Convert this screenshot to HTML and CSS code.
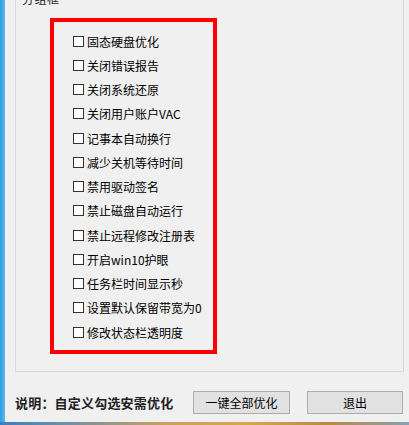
FILE: index.html
```html
<!DOCTYPE html>
<html lang="zh">
<head>
<meta charset="utf-8">
<link rel="stylesheet" href="styles.css">
</head>
<body>
<div class="window">
  <div class="edge"></div>
  <div class="main">
    <div class="group">
      <div class="group-title">分组框</div>
      <div class="redbox">
        <label class="row"><span class="cb"></span>固态硬盘优化</label>
        <label class="row"><span class="cb"></span>关闭错误报告</label>
        <label class="row"><span class="cb"></span>关闭系统还原</label>
        <label class="row"><span class="cb"></span>关闭用户账户VAC</label>
        <label class="row"><span class="cb"></span>记事本自动换行</label>
        <label class="row"><span class="cb"></span>减少关机等待时间</label>
        <label class="row"><span class="cb"></span>禁用驱动签名</label>
        <label class="row"><span class="cb"></span>禁止磁盘自动运行</label>
        <label class="row"><span class="cb"></span>禁止远程修改注册表</label>
        <label class="row"><span class="cb"></span>开启win10护眼</label>
        <label class="row"><span class="cb"></span>任务栏时间显示秒</label>
        <label class="row"><span class="cb"></span>设置默认保留带宽为0</label>
        <label class="row"><span class="cb"></span>修改状态栏透明度</label>
      </div>
    </div>
    <div class="footer">
      <span class="note">说明：自定义勾选安需优化</span>
      <button class="btn btn-all">一键全部优化</button>
      <button class="btn btn-exit">退出</button>
    </div>
  </div>
</div>
<div class="wallpaper"></div>
</body>
</html>
```
FILE: styles.css
```css
html, body {
  margin: 0;
  padding: 0;
  background: #f0f0f0;
  overflow: hidden;
}
body {
  width: 409px;
  height: 425px;
  font-family: "Noto Sans CJK SC", "Liberation Sans", sans-serif;
  font-size: 12px;
  color: #000;
}
.window {
  display: flex;
  height: 422px;
}
.edge {
  width: 5px;
  background: linear-gradient(to right, #2e9de0, #5ab8ec);
}
.main {
  flex: 1;
  display: flex;
  flex-direction: column;
  padding: 0 5px 0 10px;
}
.group {
  height: 380px;
  margin-top: -8px;
  border: 1px solid #d9d9d9;
  box-sizing: border-box;
  padding-left: 34px;
  flex: none;
}
.group-title {
  margin: -1px 0 0 -28px;
  height: 26px;
  line-height: 14px;
  color: #222;
  letter-spacing: 0.5px;
}
.redbox {
  width: 167px;
  height: 336px;
  box-sizing: border-box;
  border: 4px solid #ff0000;
  padding: 7px 0 0 19px;
}
.row {
  display: flex;
  align-items: center;
  height: 24.25px;
  gap: 3px;
  white-space: nowrap;
}
.cb {
  width: 11px;
  height: 11px;
  box-sizing: border-box;
  border: 1px solid #333;
  background: #fdfdfd;
  flex: none;
}
.footer {
  display: flex;
  align-items: center;
  height: 50px;
  padding-top: 10px;
  box-sizing: border-box;
}
.note {
  font-weight: bold;
  font-size: 13px;
  color: #222;
  width: 178px;
  letter-spacing: 0.2px;
}
.btn {
  height: 23px;
  border: 1px solid #adadad;
  background: #e1e1e1;
  font-family: inherit;
  font-size: 12px;
  color: #000;
  padding: 0;
}
.btn-all {
  width: 97px;
  margin-right: 17px;
}
.btn-exit {
  width: 96px;
}
.wallpaper {
  height: 3px;
  background: linear-gradient(to right, #3a7fc0 0%, #6c8fa8 15%, #c9a060 40%, #d7a74e 60%, #b98a46 80%, #8aa0b0 100%);
}
```
